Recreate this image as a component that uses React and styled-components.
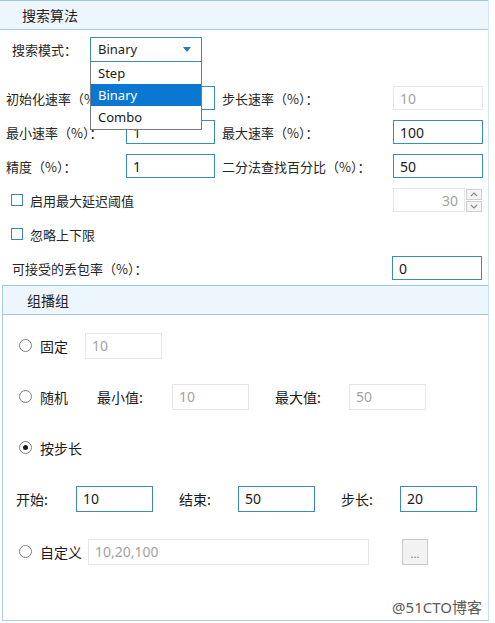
import React from 'react';
import styled, { createGlobalStyle } from 'styled-components';

const GlobalStyle = createGlobalStyle`
  html, body {
    margin: 0;
    padding: 0;
    background: #ffffff;
  }
  body {
    font-family: "Noto Sans", "Noto Sans CJK SC", sans-serif;
    color: #1e1e1e;
  }
`;

const Page = styled.div`
  width: 495px;
  height: 623px;
  overflow: hidden;
  background: #fff;
`;

const SearchSection = styled.section`
  width: 489px;
  height: 285px;
  border-right: 1px solid #d3e6f3;
  box-sizing: border-box;
`;

const GroupSection = styled.section`
  width: 487px;
  height: 336px;
  margin-left: 2px;
  border-left: 1px solid #a9cde6;
  border-right: 1px solid #c7def0;
  border-bottom: 1px solid #a9cde6;
  box-sizing: border-box;
  display: flex;
  flex-direction: column;
`;

const Header = styled.div`
  height: 30px;
  box-sizing: border-box;
  display: flex;
  align-items: center;
  padding-left: ${p => p.$indent}px;
  background: #eef6fd;
  border-top: 1px solid #9fc8e4;
  border-bottom: 1px solid #a6c7dd;
  font-size: 14px;
  font-family: "Noto Sans CJK SC", sans-serif;
  color: #222;
`;

const Row = styled.div`
  height: ${p => p.$h}px;
  display: flex;
  align-items: center;
  padding-left: ${p => p.$pl || 0}px;
  padding-right: ${p => p.$pr || 0}px;
  justify-content: ${p => p.$between ? 'space-between' : 'flex-start'};
  margin-top: ${p => p.$mt || 0}px;
  box-sizing: border-box;
`;

const Label = styled.span`
  width: ${p => p.$w ? `${p.$w}px` : 'auto'};
  margin-left: ${p => p.$ml || 0}px;
  flex-shrink: 0;
  font-family: "Noto Sans CJK SC", sans-serif;
  font-size: ${p => p.$big ? 14 : 13}px;
  color: ${p => p.$big ? '#1a1a1a' : '#262626'};
  white-space: nowrap;
  line-height: 1;
`;

const Input = styled.div`
  width: ${p => p.$w}px;
  height: ${p => p.$h || 24}px;
  margin-left: ${p => p.$ml || 0}px;
  flex-shrink: 0;
  box-sizing: border-box;
  border: 1px solid ${p => p.$disabled ? '#e6e6e6' : '#3a8cb6'};
  background: #fff;
  display: flex;
  align-items: center;
  justify-content: ${p => p.$right ? 'flex-end' : 'flex-start'};
  padding: 0 6px;
  font-size: 14px;
  font-family: "Noto Sans", sans-serif;
  color: ${p => p.$disabled ? '#a3a3a3' : '#1a1a1a'};
`;

const ComboWrap = styled.div`
  position: relative;
  width: 112px;
  height: 25px;
  flex-shrink: 0;
`;

const Combo = styled.div`
  height: 25px;
  box-sizing: border-box;
  border: 1px solid #3a8cb6;
  display: flex;
  align-items: center;
  justify-content: space-between;
  padding: 0 10px 0 7px;
  font-size: 13px;
  font-family: "Noto Sans", sans-serif;
`;

const Arrow = styled.span`
  width: 0;
  height: 0;
  border-left: 4px solid transparent;
  border-right: 4px solid transparent;
  border-top: 5px solid #2d7db8;
`;

const DropList = styled.ul`
  position: absolute;
  top: 25px;
  left: 0;
  width: 112px;
  margin: 0;
  padding: 0 0 1px;
  list-style: none;
  background: #fff;
  border: 1px solid #7a7a7a;
  border-top: none;
  box-sizing: border-box;
  z-index: 5;
`;

const DropItem = styled.li`
  height: 22px;
  display: flex;
  align-items: center;
  padding-left: 7px;
  font-size: 13px;
  font-family: "Noto Sans", sans-serif;
  background: ${p => p.$selected ? '#0a78d2' : 'transparent'};
  color: ${p => p.$selected ? '#fff' : '#1a1a1a'};
`;

const CheckBox = styled.span`
  width: 12px;
  height: 12px;
  box-sizing: border-box;
  border: 1px solid #3c86b4;
  background: #fff;
  margin-right: 7px;
  flex-shrink: 0;
`;

const Radio = styled.span`
  width: 13px;
  height: 13px;
  box-sizing: border-box;
  border: 1px solid #7f7f7f;
  border-radius: 50%;
  margin-right: 8px;
  flex-shrink: 0;
  display: flex;
  align-items: center;
  justify-content: center;
  &::after {
    content: '';
    width: 5px;
    height: 5px;
    border-radius: 50%;
    background: ${p => p.$checked ? '#1a1a1a' : 'transparent'};
  }
`;

const Spinner = styled.div`
  display: flex;
  align-items: center;
  margin-left: auto;
  margin-right: 6px;
`;

const SpinButtons = styled.div`
  display: flex;
  flex-direction: column;
  margin-left: 1px;
`;

const SpinButton = styled.span`
  width: 16px;
  height: 11px;
  box-sizing: border-box;
  border: 1px solid #cfcfcf;
  background: #f4f4f4;
  display: flex;
  align-items: center;
  justify-content: center;
  & + & {
    margin-top: 1px;
  }
`;

const DotsButton = styled.div`
  width: 26px;
  height: 26px;
  margin-left: 33px;
  box-sizing: border-box;
  border: 1px solid #c9c9c9;
  background: #f2f2f2;
  display: flex;
  align-items: flex-end;
  justify-content: center;
  padding-bottom: 5px;
  font-size: 11px;
  color: #777;
  line-height: 1;
`;

const Footer = styled.div`
  margin-top: auto;
  display: flex;
  justify-content: flex-end;
  padding: 0 6px 3px 0;
  font-size: 15px;
  font-family: "Noto Sans", "Noto Sans CJK SC", sans-serif;
  color: #5a5a5a;
`;

function Chevron({ up }) {
  return (
    <svg width="8" height="5" viewBox="0 0 8 5">
      <path d={up ? 'M1 4 L4 1 L7 4' : 'M1 1 L4 4 L7 1'} fill="none" stroke="#8a8a8a" strokeWidth="1.2" />
    </svg>
  );
}

const rateRows = [
  { l: '初始化速率（%）：', v: '', r: '步长速率（%）：', rv: '10', rd: true },
  { l: '最小速率（%）：', v: '1', r: '最大速率（%）：', rv: '100' },
  { l: '精度（%）：', v: '1', r: '二分法查找百分比（%）：', rv: '50' },
];

export default function App() {
  return (
    <Page>
      <GlobalStyle />
      <SearchSection>
        <Header $indent={22}>搜索算法</Header>
        <Row $h={34} $pl={12} $mt={2}>
          <Label $w={78}>搜索模式：</Label>
          <ComboWrap>
            <Combo>
              <span>Binary</span>
              <Arrow />
            </Combo>
            <DropList>
              <DropItem>Step</DropItem>
              <DropItem $selected>Binary</DropItem>
              <DropItem>Combo</DropItem>
            </DropList>
          </ComboWrap>
        </Row>
        <Row $h={15} />
        {rateRows.map(row => (
          <Row key={row.l} $h={34} $pl={6}>
            <Label $w={120}>{row.l}</Label>
            <Input $w={89}>{row.v}</Input>
            <Label $w={171} $ml={7}>{row.r}</Label>
            <Input $w={90} $disabled={row.rd}>{row.rv}</Input>
          </Row>
        ))}
        <Row $h={34} $pl={11}>
          <CheckBox />
          <Label>启用最大延迟阈值</Label>
          <Spinner>
            <Input $w={72} $disabled $right>30</Input>
            <SpinButtons>
              <SpinButton><Chevron up /></SpinButton>
              <SpinButton><Chevron /></SpinButton>
            </SpinButtons>
          </Spinner>
        </Row>
        <Row $h={34} $pl={11}>
          <CheckBox />
          <Label>忽略上下限</Label>
        </Row>
        <Row $h={34} $pl={12} $pr={6} $between>
          <Label>可接受的丢包率（%）：</Label>
          <Input $w={90}>0</Input>
        </Row>
      </SearchSection>

      <GroupSection>
        <Header $indent={24}>组播组</Header>
        <Row $h={51} $pl={16} $mt={5}>
          <Radio />
          <Label $w={45} $big>固定</Label>
          <Input $w={77} $h={26} $disabled>10</Input>
        </Row>
        <Row $h={51} $pl={16}>
          <Radio />
          <Label $w={57} $big>随机</Label>
          <Label $w={75} $big>最小值:</Label>
          <Input $w={77} $h={26} $disabled>10</Input>
          <Label $w={74} $ml={26} $big>最大值:</Label>
          <Input $w={77} $h={26} $disabled>50</Input>
        </Row>
        <Row $h={51} $pl={16}>
          <Radio $checked />
          <Label $big>按步长</Label>
        </Row>
        <Row $h={51} $pl={13}>
          <Label $w={60} $big>开始:</Label>
          <Input $w={77} $h={26}>10</Input>
          <Label $w={59} $ml={26} $big>结束:</Label>
          <Input $w={77} $h={26}>50</Input>
          <Label $w={59} $ml={26} $big>步长:</Label>
          <Input $w={77} $h={26}>20</Input>
        </Row>
        <Row $h={55} $pl={16}>
          <Radio />
          <Label $w={48} $big>自定义</Label>
          <Input $w={281} $h={26} $disabled>10,20,100</Input>
          <DotsButton>...</DotsButton>
        </Row>
        <Footer>@51CTO博客</Footer>
      </GroupSection>
    </Page>
  );
}
